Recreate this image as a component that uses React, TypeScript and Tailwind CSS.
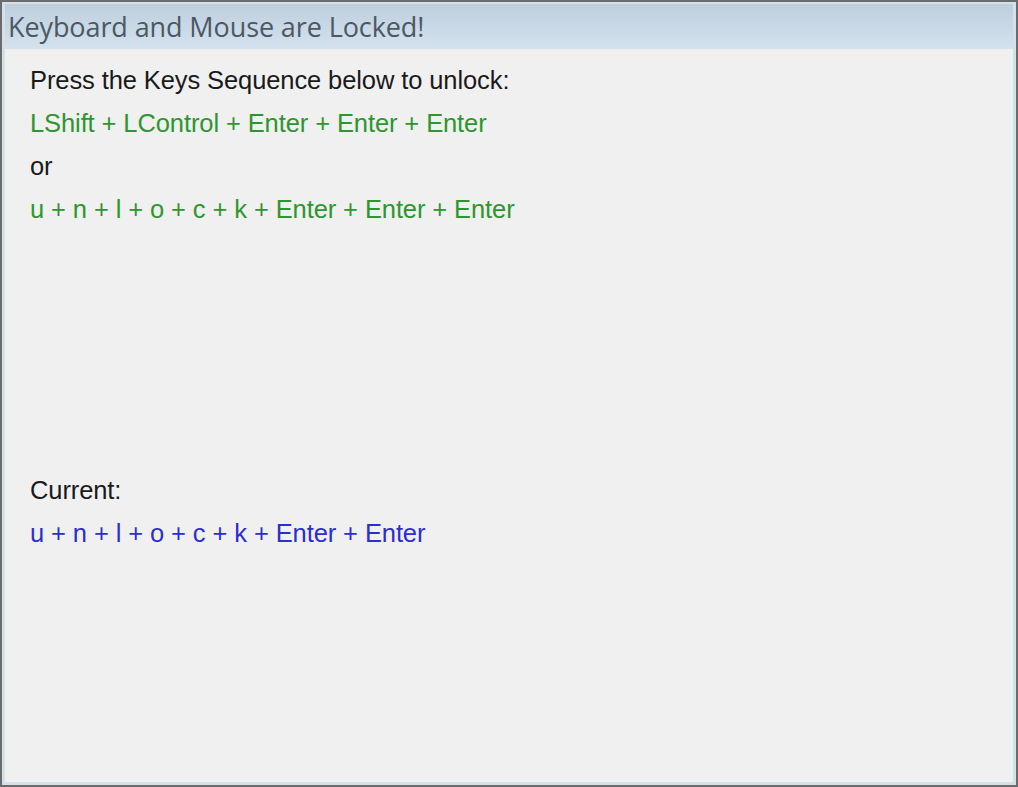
import React from "react";

const lineCls = "h-[43px] leading-[43px] whitespace-nowrap";

export default function App() {
  return (
    <div className="w-[1018px] h-[787px] bg-[#6b6b6b] p-[2px] font-['Liberation_Sans',Arial,sans-serif]">
      <div className="flex h-full flex-col border-[3px] border-t-[2px] border-[#d4e0ea] bg-[#f0f0f0]">
        {/* title bar */}
        <div className="h-[45px] shrink-0 bg-gradient-to-b from-[#bdcedd] to-[#d4e2ee] pl-[3px] pt-[7px]">
          <span className="text-[27px] leading-[31px] tracking-[-0.1px] text-[#4c5864] font-['Open_Sans',sans-serif]">
            Keyboard and Mouse are Locked!
          </span>
        </div>

        <div className="flex flex-1 flex-col pl-[25px] pt-[10px] text-[25.5px] tracking-[-0.1px]">
          <div className={`${lineCls} text-[#1a1a1a]`}>Press the Keys Sequence below to unlock:</div>
          <div className={`${lineCls} text-[#2e962e]`}>LShift + LControl + Enter + Enter + Enter</div>
          <div className={`${lineCls} text-[#1a1a1a]`}>or</div>
          <div className={`${lineCls} text-[#2e962e]`}>u + n + l + o + c + k + Enter + Enter + Enter</div>

          <div className="h-[238px]" />

          <div className={`${lineCls} text-[#1a1a1a]`}>Current:</div>
          <div className={`${lineCls} text-[#2d2dd4]`}>u + n + l + o + c + k + Enter + Enter</div>
        </div>
      </div>
    </div>
  );
}
